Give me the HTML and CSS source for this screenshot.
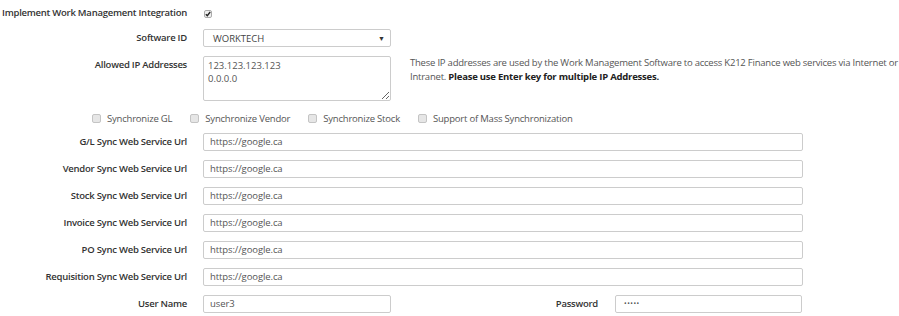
FILE: index.html
```html
<!DOCTYPE html>
<html>
<head>
<meta charset="utf-8">
<link rel="stylesheet" href="styles.css">
</head>
<body>
<div class="form">
  <div class="row r-first">
    <div class="label">Implement Work Management Integration</div>
    <div class="field"><span class="chk checked"><svg width="6" height="6" viewBox="0 0 6 6"><path d="M0.8 3.2 L2.3 4.7 L5.2 1" fill="none" stroke="#222" stroke-width="1.4"/></svg></span></div>
  </div>
  <div class="row r-select">
    <div class="label">Software ID</div>
    <div class="field"><div class="select"><span>WORKTECH</span><span class="arrow">▼</span></div></div>
  </div>
  <div class="row r-ip">
    <div class="label">Allowed IP Addresses</div>
    <div class="field"><textarea class="ta">123.123.123.123
0.0.0.0</textarea></div>
    <p class="help">These IP addresses are used by the Work Management Software to access K212 Finance web services via Internet or<br>Intranet. <b>Please use Enter key for multiple IP Addresses.</b></p>
  </div>
  <div class="checks">
    <label class="citem"><span class="chk"></span>Synchronize GL</label>
    <label class="citem"><span class="chk"></span>Synchronize Vendor</label>
    <label class="citem"><span class="chk"></span>Synchronize Stock</label>
    <label class="citem"><span class="chk"></span>Support of Mass Synchronization</label>
  </div>
  <div class="row r-url">
    <div class="label">G/L Sync Web Service Url</div>
    <div class="field"><div class="input wide">https://google.ca</div></div>
  </div>
  <div class="row r-url">
    <div class="label">Vendor Sync Web Service Url</div>
    <div class="field"><div class="input wide">https://google.ca</div></div>
  </div>
  <div class="row r-url">
    <div class="label">Stock Sync Web Service Url</div>
    <div class="field"><div class="input wide">https://google.ca</div></div>
  </div>
  <div class="row r-url">
    <div class="label">Invoice Sync Web Service Url</div>
    <div class="field"><div class="input wide">https://google.ca</div></div>
  </div>
  <div class="row r-url">
    <div class="label">PO Sync Web Service Url</div>
    <div class="field"><div class="input wide">https://google.ca</div></div>
  </div>
  <div class="row r-url">
    <div class="label">Requisition Sync Web Service Url</div>
    <div class="field"><div class="input wide">https://google.ca</div></div>
  </div>
  <div class="row r-url">
    <div class="label">User Name</div>
    <div class="field"><div class="input short">user3</div></div>
    <div class="label label2">Password</div>
    <div class="field field2"><div class="input short pw">•••••</div></div>
  </div>
</div>
</body>
</html>
```

FILE: styles.css
```css
* { box-sizing: border-box; }
html, body { margin: 0; padding: 0; background: #fff; }
body {
  font-family: "Open Sans", "Noto Sans", sans-serif;
  font-size: 9.5px;
  color: #333;
}
.form { padding-top: 4px; }
.row { display: flex; align-items: flex-start; }
.label {
  flex: none;
  width: 187px;
  text-align: right;
  font-weight: 600;
  font-size: 9.5px;
  letter-spacing: -0.25px;
  line-height: 18px;
  color: #333;
  white-space: nowrap;
}
.field { flex: none; margin-left: 16px; }
.r-first { height: 18px; }
.r-first .field { padding-top: 3px; }
.r-select { margin-top: 7px; }
.r-ip { margin-top: 9px; }
.r-url { margin-top: 9px; }
.checks + .r-url { margin-top: 6px; }
.chk {
  display: inline-flex;
  align-items: center;
  justify-content: center;
  width: 9px;
  height: 9px;
  border: 1px solid #c4c4c4;
  border-radius: 2px;
  background: #e6e6e6;
}
.chk.checked {
  width: 8px;
  height: 8px;
  margin-left: 1px;
  background: #f0f0f0;
  border-color: #aaa;
}
.select {
  width: 188px;
  height: 18px;
  border: 1px solid #ccc;
  border-radius: 2px;
  display: flex;
  align-items: center;
  justify-content: space-between;
  padding: 0 5px 0 9px;
  color: #444;
  font-size: 9.5px;
}
.arrow { font-size: 7px; color: #333; }
.ta {
  width: 188px;
  height: 45px;
  border: 1px solid #ccc;
  border-radius: 2px;
  font-family: "Open Sans", "Noto Sans", sans-serif;
  font-size: 9.5px;
  line-height: 13px;
  color: #555;
  padding: 2px 4px;
  margin: 0;
  display: block;
  resize: vertical;
}
.help {
  flex: none;
  margin: 0 0 0 19px;
  white-space: nowrap;
  line-height: 14px;
  color: #555;
  letter-spacing: -0.22px;
}
.help b { color: #222; font-weight: 700; }
.checks {
  display: flex;
  gap: 18px;
  margin-top: 8px;
  height: 18px;
  align-items: center;
  padding-left: 92px;
}
.citem {
  display: flex;
  align-items: center;
  gap: 6px;
  color: #555;
  letter-spacing: -0.2px;
}
.input {
  height: 18px;
  border: 1px solid #ccc;
  border-radius: 2px;
  padding: 0 6px;
  line-height: 16px;
  color: #555;
  white-space: nowrap;
  letter-spacing: -0.1px;
}
.wide { width: 600px; }
.short { width: 188px; }
.label2 { width: 207px; }
.field2 { margin-left: 17px; }
.field2 .short { width: 187px; }
.pw { font-size: 7px; letter-spacing: 0.5px; color: #555; padding-left: 8px; }
```
